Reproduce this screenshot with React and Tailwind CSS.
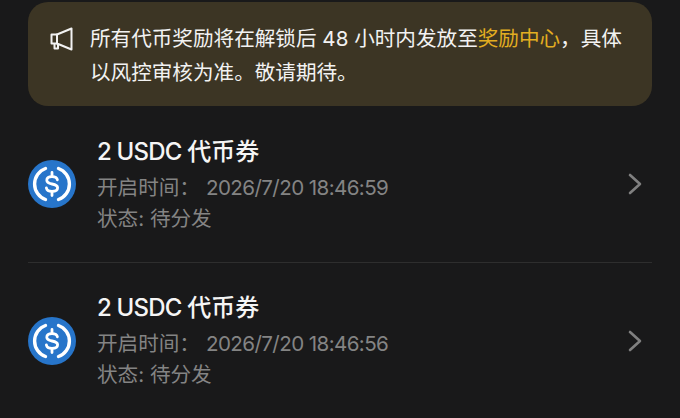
function UsdcIcon() {
  return (
    <svg width="48" height="48" viewBox="0 0 48 48" className="shrink-0">
      <circle cx="24" cy="24" r="24" fill="#2775CA" />
      <path d="M17.5 8.5C11 10.8 6.6 16.9 6.6 24C6.6 31.1 11 37.2 17.5 39.5" fill="none" stroke="#fff" strokeWidth="3.4" strokeLinecap="round" />
      <path d="M30.5 8.5C37 10.8 41.4 16.9 41.4 24C41.4 31.1 37 37.2 30.5 39.5" fill="none" stroke="#fff" strokeWidth="3.4" strokeLinecap="round" />
      <path d="M29.4 19.8C29 17.6 27.2 16.6 24 16.6C20.9 16.6 18.8 18 18.8 20.3C18.8 22.6 20.7 23.4 24 24C27.4 24.6 29.6 25.4 29.6 27.8C29.6 30.2 27.3 31.4 24 31.4C20.7 31.4 18.8 30.2 18.4 28" fill="none" stroke="#fff" strokeWidth="2.8" strokeLinecap="round" />
      <path d="M24 12.4V16.6M24 31.4V35.6" fill="none" stroke="#fff" strokeWidth="2.8" strokeLinecap="round" />
    </svg>
  );
}

function Row({ time, first }) {
  return (
    <div className={"flex items-center " + (first ? "h-[157px] border-b border-[#2e2e2e]" : "h-[155px]")}>
      <UsdcIcon />
      <div className="ml-[21px] flex-1 flex flex-col">
        <div className="text-[24px] leading-[34px] font-medium text-[#f5f5f5]">
          <span className="tracking-[-0.8px]">2 USDC </span>代币券
        </div>
        <div className="mt-[3px] flex text-[20.6px] leading-[32px] text-[#848484]">
          <span className="w-[109px]">开启时间：</span>
          <span className="tracking-[-0.6px]">{time}</span>
        </div>
        <div className="text-[20.6px] leading-[30px] text-[#848484]">状态: 待分发</div>
      </div>
      <svg width="16" height="24" viewBox="0 0 16 24" className="mr-[9px] shrink-0">
        <path d="M3 3L13 12L3 21" fill="none" stroke="#808080" strokeWidth="2.6" strokeLinecap="round" strokeLinejoin="round" />
      </svg>
    </div>
  );
}

export default function App() {
  return (
    <div className="w-[680px] h-[418px] overflow-hidden bg-[#19191a] px-[28px] pt-[2px] font-['Inter','Noto_Sans_CJK_SC',sans-serif]">
      <div className="h-[104px] rounded-[20px] bg-[#3c3524] flex items-start pl-[22px] pr-[20px] pt-[20px]">
        <svg width="24" height="24" viewBox="0 0 24 24" className="mt-[5px] shrink-0">
          <path d="M7 7.5L21.5 1.5V22.5L7 16.5V7.5Z" fill="none" stroke="#f2f2f2" strokeWidth="2" strokeLinejoin="round" />
          <path d="M7 7.5H1.5V16.5H7M4.5 16.5V21.5H8V17" fill="none" stroke="#f2f2f2" strokeWidth="2" strokeLinejoin="round" />
        </svg>
        <p className="ml-[16px] flex-1 text-[20.6px] leading-[34px] text-[#f2f2f2]">
          所有代币奖励将在解锁后 48 小时内发放至<span className="text-[#e3ae21]">奖励中心</span>，具体以风控审核为准。敬请期待。
        </p>
      </div>
      <Row time="2026/7/20 18:46:59" first />
      <Row time="2026/7/20 18:46:56" />
    </div>
  );
}
